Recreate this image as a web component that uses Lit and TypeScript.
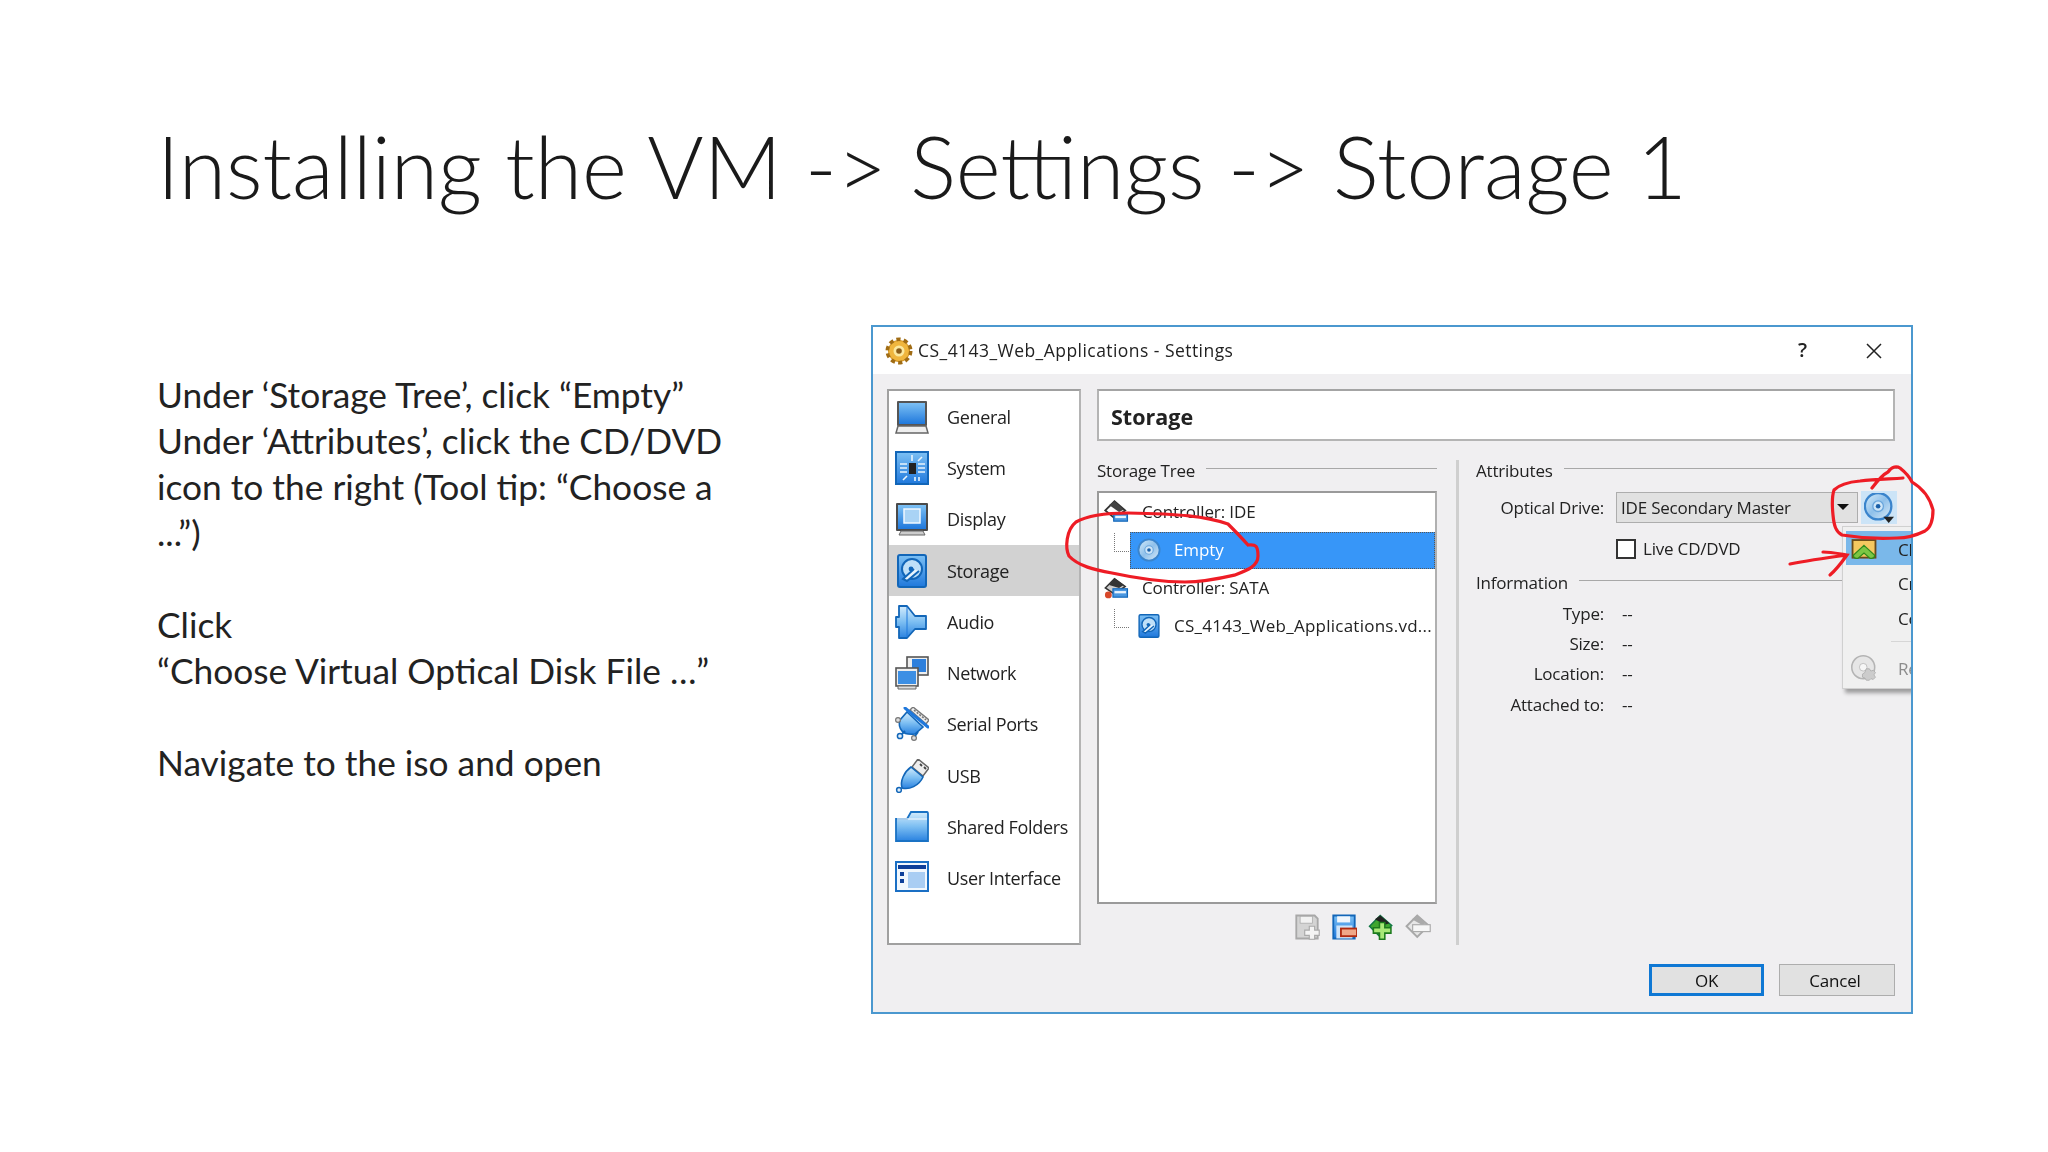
import { LitElement, css, html, svg } from "lit";
import { customElement } from "lit/decorators.js";

const ico = (size: number, body: unknown) => html`<svg class="ico" width=${size} height=${size} viewBox="0 0 34 34">${body}</svg>`;

const diskBody = svg`
  <rect x="3" y="1" width="28" height="32" rx="2" fill="url(#blue)" stroke="#1266b8" stroke-width="2"/>
  <circle cx="17" cy="15" r="10" fill="#bfe0f8" stroke="#1266b8" stroke-width="2"/>
  <circle cx="16" cy="15" r="2.4" fill="#1266b8"/>
  <path d="M24 17 L12 27 L8 25 L19 15" fill="#e8f4fc" stroke="#1266b8" stroke-width="2"/>`;

const cdBody = svg`
  <circle cx="17" cy="17" r="15" fill="url(#cd)" stroke="#3a84cc" stroke-width="2.6"/>
  <circle cx="17" cy="17" r="6" fill="#cfe6f8" stroke="#6aa6dc" stroke-width="1.5"/>
  <circle cx="17" cy="17" r="2.6" fill="#1a5fa8"/>`;

const icons: Record<string, unknown> = {
  general: svg`
    <rect x="2" y="1" width="30" height="25" rx="1" fill="#555" />
    <rect x="4" y="3" width="26" height="21" fill="url(#blue)"/>
    <path d="M3 26 L31 26 L33 33 L1 33 Z" fill="#eee" stroke="#666" stroke-width="1.5"/>`,
  system: svg`
    <rect x="1" y="1" width="32" height="32" fill="url(#blue)" stroke="#1266b8" stroke-width="2"/>
    <rect x="14" y="12" width="7" height="11" fill="#222"/>
    <path d="M5 13h7M5 17h7M5 21h7M23 13h7M23 17h7M23 21h7M17 4v6M23 10l4-4M8 29l4-4M20 26v4M24 26v4" stroke="#e8f4fc" stroke-width="1.6"/>`,
  display: svg`
    <rect x="1" y="1" width="32" height="28" rx="1" fill="#4a4a4a"/>
    <rect x="3" y="3" width="28" height="24" fill="url(#blue)"/>
    <rect x="9" y="7" width="16" height="14" fill="#a9d3f5" stroke="#f0f8ff" stroke-width="1.5"/>
    <path d="M6 29 H28 L30 33 H4 Z" fill="#ccc" stroke="#666"/>`,
  storage: diskBody,
  audio: svg`
    <path d="M1 12 H4 V1 H12 L20 11 H31 V24 H20 L12 33 H4 V22 H1 Z" fill="url(#gloss)" stroke="#1266b8" stroke-width="1.8" stroke-linejoin="round"/>
    <path d="M12 2 V32" stroke="#1f78dc" stroke-width="1"/>`,
  network: svg`
    <rect x="12" y="1" width="21" height="18" fill="#eee" stroke="#555" stroke-width="1.6"/>
    <rect x="17" y="3" width="14" height="13" fill="#2d7fdc"/>
    <rect x="1" y="12" width="22" height="18" fill="#eee" stroke="#555" stroke-width="1.6"/>
    <rect x="3" y="15" width="18" height="13" fill="#3d8fe4"/>
    <path d="M3 30 H21 V33 H3 Z" fill="#ddd" stroke="#666"/>`,
  serial: svg`
    <path d="M18 0 L34 13 L31 17 L15 3 Z" fill="#eee" stroke="#777" stroke-width="1.4"/>
    <path d="M19 3 L31 13" stroke="#777" stroke-width="1.6" stroke-dasharray="2 1.5"/>
    <path d="M12 5 L28 20 L20 27 Q10 28 7 24 Q3 19 5 13 Z" fill="url(#gloss)" stroke="#1266b8" stroke-width="1.6"/>
    <path d="M10 1 L33 20" stroke="#1f78dc" stroke-width="3" stroke-linecap="round"/>
    <circle cx="3" cy="13" r="2.4" fill="#ddd" stroke="#777" stroke-width="1.2"/>
    <circle cx="5" cy="29" r="2.6" fill="#dfeefa" stroke="#1266b8" stroke-width="1.5"/>
    <circle cx="19" cy="31" r="2.4" fill="#ddd" stroke="#777" stroke-width="1.2"/>
    <path d="M7 27 L10 24M20 29 L23 25" stroke="#1266b8" stroke-width="2"/>`,
  usb: svg`
    <path d="M23 0 L34 9 L28 17 L17 8 Z" fill="#eee" stroke="#666" stroke-width="1.5"/>
    <path d="M25 5 l2 2 M29 8 l2 2" stroke="#444" stroke-width="1.8"/>
    <path d="M16 8 L28 18 C24 27 14 31 7 29 C5 22 9 13 16 8 Z" fill="url(#gloss)" stroke="#1266b8" stroke-width="1.6"/>
    <circle cx="4" cy="31" r="2.4" fill="#dfeefa" stroke="#1266b8" stroke-width="1.5"/>`,
  folder: svg`
    <path d="M1 31 V9 L12 9 L16 2 H32 Q33 2 33 4 V31 Z" fill="url(#gloss)" stroke="#1a72c4" stroke-width="1.8"/>
    <path d="M2 9 H32" stroke="#e3f1fc" stroke-width="1.4"/>`,
  ui: svg`
    <rect x="1" y="1" width="32" height="29" fill="#f1f7fd" stroke="#1a6fc4" stroke-width="2"/>
    <rect x="3" y="4" width="28" height="4" fill="#0d3f9a"/>
    <rect x="5" y="11" width="4" height="4" fill="#0d3f9a"/>
    <rect x="5" y="18" width="4" height="4" fill="#0d3f9a"/>
    <rect x="13" y="11" width="17" height="16" fill="#a9cdf3"/>`,
  ctlIde: svg`
    <path d="M3 15 L15 3 L29 15 L15 25 Z" fill="#fff" stroke="#333" stroke-width="2.4"/>
    <path d="M15 3 L27 14 L21 17 L8 8 Z" fill="#444"/>
    <rect x="14" y="20" width="18" height="9" fill="#4a97e0" stroke="#1266b8" stroke-width="1.5"/>
    <rect x="16" y="22" width="14" height="3" fill="#eaf4fc"/>`,
  ctlSata: svg`
    <path d="M3 17 L15 5 L29 15 L15 25 Z" fill="#ccc" stroke="#333" stroke-width="2"/>
    <path d="M8 13 L15 4 L27 13 L21 17 Z" fill="#333"/>
    <rect x="13" y="18" width="19" height="11" fill="#4a97e0" stroke="#1266b8" stroke-width="1.5"/>
    <rect x="15" y="21" width="15" height="3" fill="#eaf4fc"/>
    <circle cx="7" cy="26" r="4.5" fill="#d8482a"/>`,
  cd: cdBody,
  cdMenu: svg`
    <g transform="translate(-1 -2)">${cdBody}</g>
    <path d="M22 27 H34 L28 34 Z" fill="#222"/>`,
  addDisk: svg`
    <path d="M3 2 H27 L31 6 V32 H3 Z" fill="#d4d4d4" stroke="#a8a8a8" stroke-width="2.4"/>
    <rect x="8" y="3" width="16" height="9" fill="#f2f2f2" stroke="#aaa"/>
    <path d="M20 16 h7 v5 h6 v7 h-6 v5 h-7 v-5 h-6 v-7 h6 Z" fill="#f4f4f4" stroke="#aaa" stroke-width="1.5"/>`,
  removeDisk: svg`
    <path d="M3 2 H31 V32 H3 Z" fill="url(#blue)" stroke="#1266b8" stroke-width="2.4"/>
    <rect x="8" y="3" width="17" height="8" fill="#f0f6fc"/>
    <rect x="7" y="15" width="21" height="17" fill="#cfe4f8"/>
    <rect x="13" y="19" width="21" height="10" fill="#f0a888" stroke="#b02a10" stroke-width="2.4"/>`,
  addCtl: svg`
    <path d="M2 16 L16 2 L31 15 L16 30 Z" fill="#3fa62f" stroke="#174" stroke-width="2"/>
    <path d="M16 2 L28 12 L22 14 L9 7 Z" fill="#222"/>
    <path d="M15 11 h7 v7 h8 v7 h-8 v8 h-7 v-8 h-8 v-7 h8 Z" fill="#a8e878" stroke="#1c7a1c" stroke-width="2"/>`,
  removeCtl: svg`
    <path d="M2 16 L16 2 L31 15 L16 30 Z" fill="#e6e6e6" stroke="#a8a8a8" stroke-width="2.4"/>
    <path d="M16 2 L28 12 L22 14 L9 7 Z" fill="#aaa"/>
    <rect x="10" y="14" width="23" height="9" fill="#f6f6f6" stroke="#aaa" stroke-width="1.5"/>`,
  openFile: svg`
    <rect x="2" y="4" width="30" height="23" fill="#f4c860" stroke="#6a4a1a" stroke-width="2.4"/>
    <path d="M17 11 L31 24 Q31 28 27 28 H25 L17 21 L9 28 H7 Q3 28 3 24 Z" fill="#7cc644" stroke="#2f8a1c" stroke-width="1.6"/>`,
  removeCd: svg`
    <circle cx="16" cy="16" r="15" fill="#e6e6e6" stroke="#b4b4b4" stroke-width="2"/>
    <circle cx="16" cy="16" r="5" fill="#f6f6f6" stroke="#b4b4b4"/>
    <path d="M20 18 h4 l2 3 l3 -1 l3 3 l-2 3 l2 3 l-3 3 l-3 -1 l-2 2 h-4 l-2 -3 l-3 -1 v-4 l3 -2 Z" fill="#ccc" stroke="#aaa"/>`,
};

const navItems: [string, string][] = [
  ["general", "General"],
  ["system", "System"],
  ["display", "Display"],
  ["storage", "Storage"],
  ["audio", "Audio"],
  ["network", "Network"],
  ["serial", "Serial Ports"],
  ["usb", "USB"],
  ["folder", "Shared Folders"],
  ["ui", "User Interface"],
];

@customElement("app-root")
export class AppRoot extends LitElement {
  render() {
    return html`
      <svg class="defs" width="0" height="0">
        <defs>
          <linearGradient id="blue" x1="0" y1="0" x2="0" y2="1">
            <stop offset="0" stop-color="#7cc0f4" />
            <stop offset="1" stop-color="#1f78dc" />
          </linearGradient>
          <linearGradient id="gloss" x1="0" y1="0" x2="0" y2="1">
            <stop offset="0" stop-color="#d4ecfc" />
            <stop offset=".5" stop-color="#7cbef2" />
            <stop offset="1" stop-color="#2a82e0" />
          </linearGradient>
          <linearGradient id="cd" x1="0" y1="0" x2="1" y2="1">
            <stop offset="0" stop-color="#d6ecfa" />
            <stop offset=".5" stop-color="#8fc0ea" />
            <stop offset="1" stop-color="#dcecf8" />
          </linearGradient>
        </defs>
      </svg>

      <h1>Installing the VM -&gt; Settings -&gt; Storage 1</h1>

      <div class="content">
        <div class="notes">
          <p>Under ‘Storage Tree’, click “Empty”<br />
            Under ‘Attributes’, click the CD/DVD<br />
            icon to the right (Tool tip: “Choose a<br />
            ...”)</p>
          <p>Click<br />“Choose Virtual Optical Disk File …”</p>
          <p>Navigate to the iso and open</p>
        </div>

        ${this.renderDialog()}
      </div>

      <svg class="ink" width="2048" height="1152" viewBox="0 0 2048 1152">
        <path d="M1228 524 C1205 516 1180 514 1128 513 C1110 513 1090 514 1076 522 C1066 530 1065 548 1069 556 C1078 566 1095 570 1112 573 C1135 578 1160 582 1185 582 C1205 582 1222 578 1235 575 C1248 570 1258 566 1258 556 C1258 546 1256 544 1248 545 C1240 536 1234 530 1228 524 Z" />
        <path d="M1872 488 C1878 480 1884 474 1888 472 C1892 466 1897 466 1900 468 C1905 472 1909 476 1912 482 C1922 488 1930 498 1933 510 C1933 520 1930 528 1925 531 C1915 536 1905 538 1897 538 C1880 539 1860 538 1842 535 C1836 532 1834 526 1833 515 C1832 505 1832 496 1834 490 C1840 484 1848 482 1860 481 C1875 479 1890 479 1903 478" />
        <path d="M1790 564 C1805 561 1825 558 1847 555 M1823 552 C1832 552 1840 554 1847 555 C1842 562 1836 570 1830 575" />
      </svg>
    `;
  }

  renderDialog() {
    return html`
      <div class="dialog">
        <div class="titlebar">
          <svg class="gear" width="28" height="28" viewBox="0 0 28 28">
            <circle cx="14" cy="14" r="11" fill="#d99a28" stroke="#a06c14" stroke-width="5" stroke-dasharray="4 3" />
            <circle cx="14" cy="14" r="10" fill="#f0b63e" />
            <circle cx="14" cy="14" r="5.5" fill="#fbe9a0" />
            <circle cx="14" cy="14" r="2.8" fill="#8a5c18" />
          </svg>
          <span class="title">CS_4143_Web_Applications - Settings</span>
          <span class="help">?</span>
          <svg class="close" width="16" height="16" viewBox="0 0 16 16">
            <path d="M1 1 L15 15 M15 1 L1 15" stroke="#222" stroke-width="1.5" />
          </svg>
        </div>

        <div class="body">
          <div class="nav">
            ${navItems.map(
              ([key, label]) => html`
                <div class="nav-item ${key === "storage" ? "on" : ""}">
                  ${ico(34, icons[key])}<span>${label}</span>
                </div>
              `
            )}
          </div>

          <div class="main">
            <div class="page-title">Storage</div>
            <div class="panes">
              <div class="left">
                <div class="group"><span>Storage Tree</span><i></i></div>
                <div class="tree">
                  <div class="row ctl">${ico(26, icons.ctlIde)}<span>Controller: IDE</span></div>
                  <div class="row leaf sel"><b></b>${ico(24, icons.cd)}<span>Empty</span></div>
                  <div class="row ctl">${ico(26, icons.ctlSata)}<span>Controller: SATA</span></div>
                  <div class="row leaf"><b></b>${ico(24, icons.storage)}<span class="file">CS_4143_Web_Applications.vd...</span></div>
                </div>
                <div class="tools">
                  ${ico(26, icons.addDisk)}${ico(26, icons.removeDisk)}${ico(26, icons.addCtl)}${ico(26, icons.removeCtl)}
                </div>
              </div>

              <div class="divider"></div>

              <div class="right">
                <div class="group"><span>Attributes</span><i></i></div>
                <div class="form drive">
                  <label>Optical Drive:</label>
                  <div class="combo-wrap">
                    <div class="combo"><span>IDE Secondary Master</span><em></em></div>
                    <div class="cd-btn">${ico(30, icons.cdMenu)}</div>
                  </div>
                </div>
                <div class="form live">
                  <span></span>
                  <div class="check"><s></s><span>Live CD/DVD</span></div>
                </div>
                <div class="group info"><span>Information</span><i></i></div>
                <div class="form facts">
                  <label>Type:</label><span>--</span>
                  <label>Size:</label><span>--</span>
                  <label>Location:</label><span>--</span>
                  <label>Attached to:</label><span>--</span>
                </div>
              </div>
            </div>
          </div>
        </div>

        <div class="footer">
          <button class="ok">OK</button>
          <button class="cancel">Cancel</button>
        </div>

        <div class="menu">
          <div class="mi hot">${ico(26, icons.openFile)}<span>Choose Virtual Optical Disk File...</span></div>
          <div class="mi"><u></u><span>Create Virtual Optical Disk...</span></div>
          <div class="mi"><u></u><span>Copy Disk...</span></div>
          <hr />
          <div class="mi off">${ico(26, icons.removeCd)}<span>Remove Disk from Virtual Drive</span></div>
        </div>
      </div>
    `;
  }

  static styles = css`
    :host {
      display: block;
      position: relative;
      width: 2048px;
      height: 1152px;
      overflow: hidden;
      background: #fff;
      color: #111;
      font-family: "Lato", "Liberation Sans", sans-serif;
    }
    .defs {
      position: absolute;
    }
    h1 {
      margin: 0;
      height: 325px;
      box-sizing: border-box;
      padding: 116px 0 0 157px;
      font-size: 86px;
      line-height: 100px;
      font-weight: 300;
      color: #1a1a1a;
      white-space: nowrap;
    }
    .content {
      display: flex;
      padding-left: 157px;
    }
    .notes {
      width: 714px;
      flex: none;
      padding-top: 47px;
      font-size: 35.3px;
      line-height: 46px;
      color: #222;
    }
    .notes p {
      margin: 0 0 46px;
    }
    .ink {
      position: absolute;
      inset: 0;
      pointer-events: none;
      fill: none;
    }
    .ink path {
      fill: none;
      stroke: #ee1c25;
      stroke-width: 3.2;
      stroke-linecap: round;
    }

    .dialog {
      position: relative;
      flex: none;
      width: 1042px;
      height: 689px;
      box-sizing: border-box;
      border: 2px solid #4b98cf;
      background: #f0eff1;
      overflow: hidden;
      font-family: "Open Sans", "Noto Sans", sans-serif;
      font-size: 17px;
      letter-spacing: -0.2px;
      color: #222;
      filter: blur(0.4px);
    }
    .ico {
      display: block;
      flex: none;
    }
    .titlebar {
      display: flex;
      align-items: center;
      height: 47px;
      background: #fff;
      padding-left: 12px;
    }
    .title {
      margin: 0 0 2px 5px;
      flex: 1;
      font-size: 17.5px;
      letter-spacing: 0.45px;
    }
    .help {
      font-weight: 600;
      font-size: 20px;
      margin: 0 59px 2px 0;
    }
    .close {
      margin-right: 29px;
    }
    .body {
      display: flex;
      gap: 16px;
      padding: 15px 15px 0 14px;
    }
    .nav {
      width: 194px;
      height: 556px;
      box-sizing: border-box;
      border: 2px solid #a0a0a0;
      border-right-color: #b4b4b4;
      background: #fff;
      flex: none;
    }
    .nav-item {
      display: flex;
      align-items: center;
      height: 51.3px;
      gap: 18px;
      padding-left: 6px;
      font-size: 18px;
      letter-spacing: -0.35px;
    }
    .nav-item.on {
      background: #d2d2d2;
    }
    .main {
      width: 798px;
      flex: none;
    }
    .page-title {
      height: 52px;
      box-sizing: border-box;
      border: 2px solid #b4b4b4;
      border-top-color: #a4a4a4;
      background: #fff;
      padding: 2px 0 0 12px;
      display: flex;
      align-items: center;
      font-weight: 700;
      font-size: 21.5px;
      letter-spacing: 0;
    }
    .panes {
      display: flex;
      margin-top: 19px;
    }
    .left {
      width: 340px;
      flex: none;
    }
    .divider {
      width: 3px;
      height: 485px;
      margin: 0 17px 0 19px;
      background: #cfcfcf;
      flex: none;
    }
    .right {
      flex: 1;
    }
    .group {
      display: flex;
      align-items: center;
      gap: 11px;
      height: 22px;
    }
    .group span {
      margin-top: -2px;
    }
    .group i {
      flex: 1;
      height: 1px;
      margin-top: -5px;
      background: #a8a8a8;
    }
    .tree {
      margin-top: 9px;
      height: 413px;
      box-sizing: border-box;
      border: 2px solid #9a9a9a;
      border-right-color: #b0b0b0;
      background: #fff;
      overflow: hidden;
    }
    .row {
      display: flex;
      align-items: center;
      position: relative;
      white-space: nowrap;
      letter-spacing: -0.1px;
    }
    .row span {
      margin-top: -2px;
    }
    .ctl {
      height: 38.5px;
      padding-left: 4px;
      gap: 13px;
    }
    .leaf {
      height: 37.5px;
      margin-left: 31px;
      padding-left: 7px;
      gap: 13px;
    }
    .leaf b {
      position: absolute;
      left: -16px;
      top: 1px;
      width: 14px;
      height: 18px;
      border-left: 1px dotted #777;
      border-bottom: 1px dotted #777;
    }
    .row .file {
      letter-spacing: 0.25px;
    }
    .sel {
      background: #3796f8;
      color: #fff;
      outline: 1px dotted #555;
      outline-offset: -1px;
    }
    .tools {
      display: flex;
      justify-content: flex-end;
      gap: 11px;
      margin-top: 10px;
      padding-right: 6px;
    }
    .form {
      display: grid;
      grid-template-columns: 128px 1fr;
      column-gap: 12px;
      align-items: center;
    }
    .form label {
      text-align: right;
    }
    .drive {
      margin-top: 9px;
    }
    .combo-wrap {
      display: flex;
      gap: 3px;
      align-items: center;
    }
    .combo {
      width: 242px;
      height: 31px;
      box-sizing: border-box;
      border: 1px solid #adadad;
      background: #e1e1e1;
      display: flex;
      align-items: center;
      padding-left: 4px;
      position: relative;
    }
    .combo em {
      position: absolute;
      right: 8px;
      top: 11px;
      border: 6px solid transparent;
      border-top: 6px solid #111;
      border-bottom: 0;
    }
    .cd-btn {
      width: 36px;
      height: 33px;
      background: #cce4f7;
      display: flex;
      align-items: center;
      justify-content: center;
    }
    .live {
      margin-top: 13px;
    }
    .check {
      display: flex;
      align-items: center;
      gap: 7px;
    }
    .check s {
      width: 20px;
      height: 20px;
      box-sizing: border-box;
      border: 2px solid #333;
      background: #fff;
    }
    .group.info {
      margin-top: 12px;
    }
    .facts {
      margin-top: 4px;
      grid-auto-rows: 30.4px;
    }
    .facts span {
      padding-left: 6px;
    }
    .footer {
      display: flex;
      justify-content: flex-end;
      gap: 15px;
      margin-top: 19px;
      padding-right: 16px;
    }
    button {
      width: 116px;
      height: 32px;
      box-sizing: border-box;
      border: 1px solid #adadad;
      background: #e1e1e1;
      font: inherit;
      letter-spacing: inherit;
      color: #111;
      padding: 0;
    }
    button.cancel {
      padding-right: 4px;
    }
    button.ok {
      width: 115px;
      border: 3px solid #0f78d4;
    }

    .menu {
      position: absolute;
      left: 969px;
      top: 199px;
      width: 140px;
      height: 163px;
      box-sizing: border-box;
      border: 1px solid #d0d0d0;
      background: #f0f0f0;
      box-shadow: 3px 4px 4px rgba(0, 0, 0, 0.35);
      padding: 4px 0 0 3px;
      white-space: nowrap;
      overflow: hidden;
    }
    .mi {
      display: flex;
      align-items: center;
      height: 35px;
      padding-left: 5px;
      gap: 21px;
    }
    .mi span {
      margin-top: 2px;
    }
    .mi u {
      width: 26px;
      flex: none;
    }
    .mi.hot {
      height: 34px;
      background: #7ab8ea;
    }
    .mi.hot .ico {
      margin-top: 4px;
    }
    .mi.off {
      color: #8c8c8c;
    }
    .menu hr {
      margin: 6px 0 8px 45px;
      border: 0;
      height: 1px;
      background: #d6d6d6;
    }
  `;
}
